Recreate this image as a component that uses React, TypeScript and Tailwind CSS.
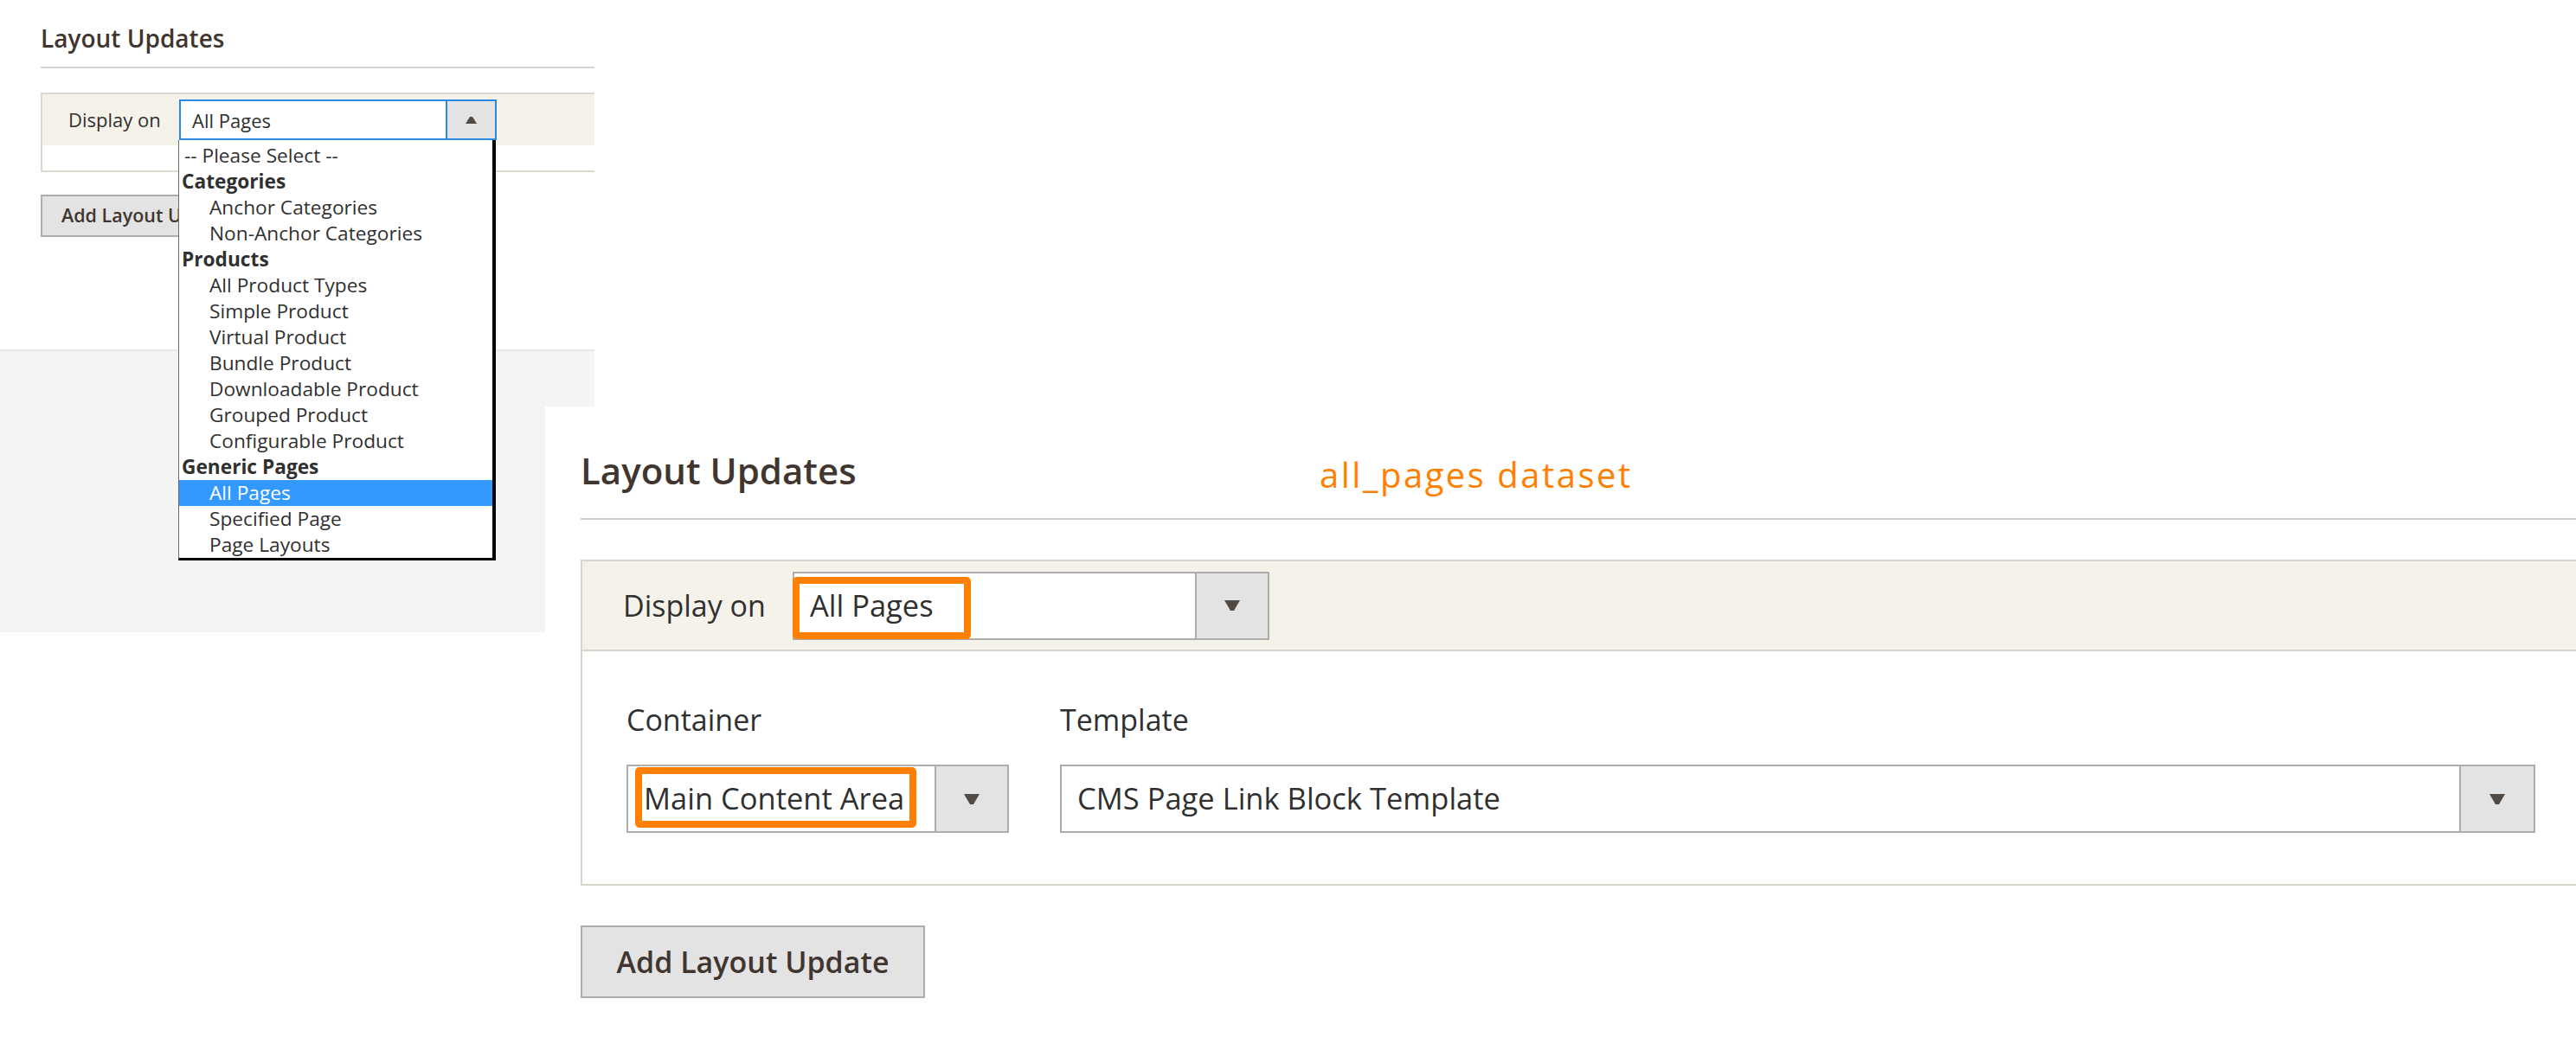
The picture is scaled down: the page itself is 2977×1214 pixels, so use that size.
import React from "react";

const ORANGE = "border-[#ff7f00]";

function DownArrow() {
  return (
    <svg width="18" height="12" viewBox="0 0 18 12">
      <polygon points="0,0 18,0 11,12 7,12" fill="#514943" />
    </svg>
  );
}

function UpArrow() {
  return (
    <svg width="13" height="8" viewBox="0 0 13 8">
      <polygon points="5,0 8,0 13,8 0,8" fill="#514943" />
    </svg>
  );
}

function BigSelect({
  width,
  btn,
  value,
  children,
}: {
  width: string;
  btn: string;
  value: string;
  children?: React.ReactNode;
}) {
  return (
    <div className={`relative ${width} h-[79px] shrink-0 flex border-2 border-[#adadad] bg-white`}>
      <div className="flex-1 flex items-center pl-[18px] text-[34.5px] leading-none text-[#303030] overflow-hidden whitespace-nowrap">
        {value}
      </div>
      <div className={`${btn} shrink-0 flex items-center justify-center border-l-2 border-[#adadad] bg-[#e3e3e3]`}>
        <DownArrow />
      </div>
      {children}
    </div>
  );
}

const OPTIONS: { label: string; group?: boolean; active?: boolean; plain?: boolean }[] = [
  { label: "-- Please Select --", plain: true },
  { label: "Categories", group: true },
  { label: "Anchor Categories" },
  { label: "Non-Anchor Categories" },
  { label: "Products", group: true },
  { label: "All Product Types" },
  { label: "Simple Product" },
  { label: "Virtual Product" },
  { label: "Bundle Product" },
  { label: "Downloadable Product" },
  { label: "Grouped Product" },
  { label: "Configurable Product" },
  { label: "Generic Pages", group: true },
  { label: "All Pages", active: true },
  { label: "Specified Page" },
  { label: "Page Layouts" },
];

function SmallScreen() {
  return (
    <div className="absolute left-0 top-0 w-[687px] h-[731px] flex flex-col overflow-hidden bg-white">
      {/* white part */}
      <div className="h-[404px] shrink-0 pl-[47px] pt-[27px]">
        <h2 className="text-[28px] leading-[34px] font-semibold text-[#41362f] pb-[16px] border-b-2 border-[#d6d3cc]">
          Layout Updates
        </h2>

        <div className="mt-[28px] -mr-2 border-2 border-[#dcd8d0]">
          <div className="h-[59px] flex items-center bg-[#f5f2ea]">
            <span className="w-[158px] shrink-0 pl-[30px] text-[22px] text-[#303030]">Display on</span>
            <div className="w-[367px] h-[47px] shrink-0 flex border-2 border-[#2a8ae2] bg-white">
              <div className="flex-1 flex items-center pl-[13px] text-[22px] leading-none text-[#303030]">
                All Pages
              </div>
              <div className="w-[57px] flex items-center justify-center border-l-2 border-[#2a8ae2] bg-[#e3e3e3]">
                <UpArrow />
              </div>
            </div>
          </div>
          <div className="h-[29px] bg-white" />
        </div>

        <button className="mt-[26px] h-[49px] px-[22px] flex items-center border-2 border-[#adadad] bg-[#e3e3e3] text-[21.5px] font-semibold text-[#41362f]">
          Add Layout Update
        </button>
      </div>

      {/* grey part */}
      <div className="flex-1 bg-[#f4f4f4] border-t-2 border-[#e6e6e6]" />

      {/* open list */}
      <ul className="absolute left-[206px] top-[162px] w-[367px] pt-[3px] bg-white border-l border-l-[#6b6b6b] border-r-[4px] border-r-black border-b-[3px] border-b-black">
        {OPTIONS.map((o) => (
          <li
            key={o.label}
            className={`h-[30px] flex items-center text-[22.7px] leading-none whitespace-nowrap ${
              o.group
                ? "pl-[3px] font-bold text-[#303030]"
                : o.plain
                ? "pl-[6px] text-[#303030]"
                : o.active
                ? "pl-[35px] bg-[#3399ff] text-white"
                : "pl-[35px] text-[#303030]"
            }`}
          >
            {o.label}
          </li>
        ))}
      </ul>
    </div>
  );
}

function BigScreen() {
  return (
    <div className="absolute left-[630px] top-[470px] right-0 bottom-0 overflow-hidden bg-white pl-[41px] pt-[49px]">
      <h2 className="text-[42px] leading-[50px] font-semibold text-[#41362f] pb-[30px] border-b-2 border-[#d3cfc6]">
        Layout Updates
      </h2>
      <span className="absolute left-[895px] top-[56px] text-[40px] leading-[46px] tracking-[2.5px] text-[#ff8000] whitespace-nowrap">
        all_pages dataset
      </span>

      <div className="mt-[46px] -mr-2 border-2 border-[#d9d4ca]">
        <div className="h-[104px] flex items-center bg-[#f5f2ea] border-b-2 border-[#d9d4ca]">
          <span className="w-[243px] shrink-0 pl-[47px] text-[34px] text-[#303030]">Display on</span>
          <BigSelect width="w-[551px]" btn="w-[84px]" value="All Pages">
            <div className={`absolute left-[-2px] top-[4px] w-[206px] h-[72px] border-[8px] ${ORANGE} rounded-[5px]`} />
          </BigSelect>
        </div>

        <div className="h-[269px] flex gap-[59px] pl-[51px] pt-[56px]">
          <div className="w-[442px] shrink-0">
            <div className="text-[34px] leading-[46px] text-[#303030]">Container</div>
            <div className="mt-[29px]">
              <BigSelect width="w-[442px]" btn="w-[84px]" value="Main Content Area">
                <div className={`absolute left-[8px] top-[1px] w-[325px] h-[70px] border-[8px] ${ORANGE} rounded-[5px]`} />
              </BigSelect>
            </div>
          </div>
          <div className="w-[1705px] shrink-0">
            <div className="text-[34px] leading-[46px] text-[#303030]">Template</div>
            <div className="mt-[29px]">
              <BigSelect width="w-[1705px]" btn="w-[86px]" value="CMS Page Link Block Template" />
            </div>
          </div>
        </div>
      </div>

      <button className="mt-[46px] w-[398px] h-[84px] flex items-center justify-center border-2 border-[#adadad] bg-[#e3e3e3] text-[34px] font-semibold text-[#41362f]">
        Add Layout Update
      </button>
    </div>
  );
}

export default function App() {
  return (
    <div className="relative w-[2977px] h-[1214px] overflow-hidden bg-white font-['Open_Sans','Liberation_Sans',sans-serif]">
      <SmallScreen />
      <BigScreen />
    </div>
  );
}
